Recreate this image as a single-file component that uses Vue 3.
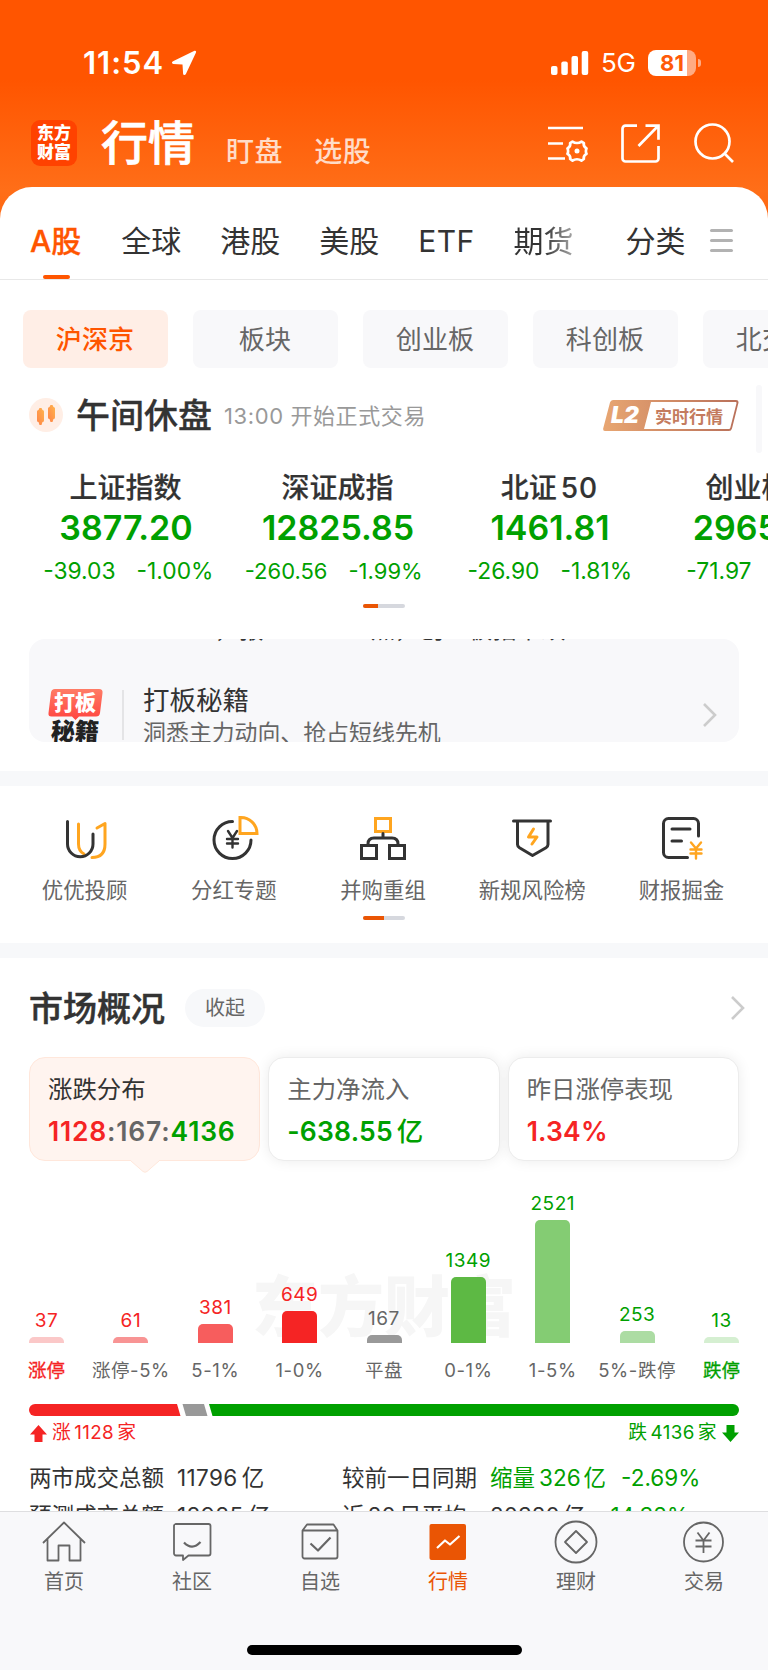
<template>
  <div class="page">
    <header class="header">
      <div class="status">
        <span class="status__time">11:54</span>
        <svg class="status__geo" width="26" height="26" viewBox="0 0 26 26">
          <path d="M23.500.8 2 11.200c-1.600.8-1.300 2.500.3 2.700l9.200.6.6 9.200c.2 1.700 2 1.900 2.800.3L25 2.400c.5-1.200-.4-2.100-1.500-1.600z" fill="#fff" />
        </svg>
        <svg class="status__signal" width="38" height="24" viewBox="0 0 38 24" fill="#fff">
          <rect x="0" y="15" width="6.500" height="9" rx="2" />
          <rect x="10.300" y="10.500" width="6.500" height="13.500" rx="2" />
          <rect x="20.500" y="5" width="6.500" height="19" rx="2" />
          <rect x="30.700" y="0" width="6.500" height="24" rx="2" />
        </svg>
        <span class="status__net">5G</span>
        <div class="battery"><span class="battery__text">81</span></div>
        <i class="battery__nub"></i>
      </div>

      <div class="nav">
        <div class="logo"><span>东方</span><span>财富</span></div>
        <h1 class="nav__title">行情</h1>
        <span class="nav__link">盯盘</span>
        <span class="nav__link nav__link--second">选股</span>
        <div class="nav__icons">
          <svg width="40" height="40" viewBox="0 0 40 40" fill="none" stroke="#fff" stroke-width="2.700">
            <path d="M0 5h35M0 20.500h15M0 35.500h17" />
            <path
              stroke-linejoin="round"
              stroke-width="2.700"
              d="M24.500 18.600c2.500 1.700 6.500 1.700 9 0l2.400 1.600c-.6 2.600.5 4 2.600 5.200q-1.200 2.800 0 5.400c-2.100 1.200-3.200 2.600-2.600 5.200l-2.400 1.600c-2.500-1.700-6.500-1.700-9 0l-2.400-1.600c.6-2.600-.5-4-2.600-5.200q1.200-2.600 0-5.400c2.100-1.200 3.200-2.600 2.600-5.200z"
            />
            <circle cx="29" cy="28" r="2.500" fill="#fff" stroke="none" />
          </svg>
          <svg width="40" height="40" viewBox="0 0 40 40" fill="none" stroke="#fff" stroke-width="2.700">
            <path d="M16 2.700H4.500a3 3 0 0 0-3 3V35.500a3 3 0 0 0 3 3H34.500a3 3 0 0 0 3-3V23" />
            <path d="M24.500 2.700h13v14M37 3 17.500 23" />
          </svg>
          <svg width="40" height="40" viewBox="0 0 40 40" fill="none" stroke="#fff" stroke-width="2.700">
            <circle cx="18.500" cy="18.500" r="17" />
            <path d="m30 30 9 9" />
          </svg>
        </div>
      </div>
    </header>

    <main class="panel">
      <nav class="tabs">
        <span
          v-for="tab in tabs"
          :key="tab"
          class="tabs__item"
          :class="{ 'tabs__item--active': tab === activeTab, 'tabs__item--fade': tab === '期货' }"
          >{{ tab }}</span
        >
        <span class="tabs__item tabs__item--all">分类</span>
        <i class="tabs__menu"></i>
      </nav>

      <div class="chips">
        <span
          v-for="(chip, i) in chips"
          :key="chip"
          class="chips__item"
          :class="{ 'chips__item--active': i === 0 }"
          >{{ chip }}</span
        >
      </div>

      <div class="session">
        <svg class="session__icon" width="34" height="34" viewBox="0 0 34 34">
          <defs>
            <linearGradient id="candle" x1="0" y1="1" x2="1" y2="0">
              <stop offset="0" stop-color="#ff8248" />
              <stop offset="1" stop-color="#ffb54d" />
            </linearGradient>
          </defs>
          <circle cx="17" cy="17" r="17" fill="#ffeee5" />
          <g fill="url(#candle)">
            <path d="M8 13.500q0-1.500 1.500-1.500l1-2h2l1 2q1.500 0 1.500 1.500v9q0 1.500-1.500 1.500l-1 3h-2l-1-3q-1.500 0-1.500-1.500z" />
            <path d="M19 10.500q0-1.500 1.500-1.500l1-2h2l1 2q1.500 0 1.500 1.500v9q0 1.500-1.500 1.500l-1 3h-2l-1-3q-1.500 0-1.500-1.500z" />
          </g>
        </svg>
        <h2 class="session__title">午间休盘</h2>
        <span class="session__note">13:00 开始正式交易</span>
        <div class="level2">
          <svg class="level2__frame" width="136" height="31" viewBox="0 0 136 31">
            <defs>
              <linearGradient id="copper" x1="0" x2="1">
                <stop offset="0" stop-color="#e8a672" />
                <stop offset="1" stop-color="#b9705a" />
              </linearGradient>
            </defs>
            <path d="M10 0H133q3 0 2.400 3L129 28.500q-.7 2.500-3 2.500H2.500Q-.5 31 .3 28L7 2.500Q7.700 0 10 0z" fill="url(#copper)" />
            <path d="M48 2H132.500q1.300 0 1 1.200L127.300 27.800q-.3 1.200-1.500 1.200H41z" fill="#fff" />
          </svg>
          <b class="level2__mark">L2</b>
          <span class="level2__text">实时行情</span>
        </div>
        <i class="session__side"></i>
      </div>

      <div class="indexes">
        <div v-for="item in indexes" :key="item.name" class="index">
          <p class="index__name">{{ item.name }}<span v-if="item.num" class="index__num">{{ item.num }}</span></p>
          <p class="index__price">{{ item.price }}</p>
          <p class="index__diff" :class="{ 'index__diff--long': item.diff.length > 6 }">
            <span>{{ item.diff }}</span><span>{{ item.percent }}</span>
          </p>
        </div>
      </div>
      <div class="dots"><i class="dots__on"></i></div>

      <div class="notice">
        <p class="notice__prev">，报12825.85点，创业板指下跌</p>
        <div class="notice__body">
          <div class="notice__art">
            <svg class="notice__badge" width="56" height="31" viewBox="0 0 56 31">
              <defs>
                <linearGradient id="coral" x1="0" y1="0" x2="0" y2="1">
                  <stop offset="0" stop-color="#ff7c66" />
                  <stop offset="1" stop-color="#ff4540" />
                </linearGradient>
              </defs>
              <path d="M7 0H51q4 0 3.500 4L52 24q-.5 3.500-4 3.500H31L27.500 31 24 27.500H3.500Q0 27.500.5 24L3 3.500Q3.500 0 7 0z" fill="url(#coral)" />
            </svg>
            <b class="notice__a">打板</b>
            <b class="notice__b">秘籍</b>
          </div>
          <i class="notice__line"></i>
          <div class="notice__text">
            <p class="notice__title">打板秘籍</p>
            <p class="notice__sub">洞悉主力动向、抢占短线先机</p>
          </div>
          <svg class="notice__arrow" width="14" height="24" viewBox="0 0 14 24" fill="none" stroke="#ccc" stroke-width="2.600">
            <path d="M1 1 12 12 1 23" />
          </svg>
        </div>
      </div>

      <div class="band"></div>

      <div class="services">
        <div v-for="s in services" :key="s.name" class="service">
          <svg
            width="50"
            height="50"
            viewBox="0 0 50 50"
            fill="none"
            stroke="#333"
            stroke-width="3"
            stroke-linecap="round"
            stroke-linejoin="round"
            v-html="s.icon"
          ></svg>
          <span class="service__name">{{ s.name }}</span>
        </div>
      </div>
      <div class="dots dots--services"><i class="dots__on dots__on--wide"></i></div>

      <div class="band"></div>

      <div class="market-head">
        <h2 class="market-head__title">市场概况</h2>
        <span class="market-head__fold">收起</span>
        <svg class="market-head__arrow" width="14" height="24" viewBox="0 0 14 24" fill="none" stroke="#ccc" stroke-width="2.600">
          <path d="M1 1 12 12 1 23" />
        </svg>
      </div>

      <div class="cards">
        <div class="card card--active">
          <p class="card__name">涨跌分布</p>
          <p class="card__value">
            <span class="up">1128</span><span class="flat">:167:</span><span class="down">4136</span>
          </p>
          <svg class="card__tail" width="28" height="13" viewBox="0 0 28 13">
            <path d="M0 1 12 11.500q2 1.500 4 0L28 1V0H0z" fill="#fff4ef" />
            <path d="M0 1 12 11.500q2 1.500 4 0L28 1" fill="none" stroke="#ffe7db" />
          </svg>
        </div>
        <div class="card">
          <p class="card__name">主力净流入</p>
          <p class="card__value down">-638.55<span class="card__unit">亿</span></p>
        </div>
        <div class="card">
          <p class="card__name">昨日涨停表现</p>
          <p class="card__value up">1.34%</p>
        </div>
      </div>

      <div class="chart">
        <span class="chart__mark">东方财富</span>
        <div v-for="b in bars" :key="b.label" class="bar" :class="'bar--' + b.type">
          <span class="bar__value">{{ b.value }}</span>
          <i class="bar__fill" :style="{ height: barHeight(b.value) + 'px', background: b.color }"></i>
          <span class="bar__label" :class="{ 'bar__label--edge': b.edge }">{{ b.label }}</span>
        </div>
      </div>

      <svg class="ratio" width="710" height="12" viewBox="0 0 710 12">
        <path d="M6 0H148L151.500 12H6A6 6 0 0 1 6 0z" fill="#f52424" />
        <path d="M153.500 0H175L178.500 12H157z" fill="#999" />
        <path d="M180 0H704a6 6 0 0 1 0 12H183.500z" fill="#00a000" />
      </svg>
      <div class="totals">
        <span class="totals__side up">
          <svg width="17" height="17" viewBox="0 0 17 17"><path d="M8.500 0 17 9.500H12.500V17h-8V9.500H0z" fill="#f52424" /></svg>
          <span>涨<em>1128</em>家</span>
        </span>
        <span class="totals__side down">
          <span>跌<em>4136</em>家</span>
          <svg width="17" height="17" viewBox="0 0 17 17"><path d="M8.500 17 17 7.500H12.500V0h-8V7.500H0z" fill="#00a000" /></svg>
        </span>
      </div>

      <div class="stats">
        <div v-for="row in stats" :key="row.name" class="stats__row">
          <span class="stats__name">{{ row.name }}</span>
          <span class="stats__amount">{{ row.amount }}<em>亿</em></span>
          <span class="stats__name">{{ row.compare }}</span>
          <span class="stats__delta" :class="{ down: row.prefix }"
            ><em v-if="row.prefix">{{ row.prefix }}</em>{{ row.delta }}<b>亿</b></span
          >
          <span class="down">{{ row.percent }}</span>
        </div>
      </div>
    </main>

    <footer class="tabbar">
      <div class="tabbar__list">
        <div v-for="t in tabbar" :key="t.name" class="tabbar__item" :class="{ 'tabbar__item--active': t.active }">
          <svg
            width="44"
            height="44"
            viewBox="0 0 44 44"
            fill="none"
            stroke="#666"
            stroke-width="1.800"
            stroke-linejoin="round"
            v-html="t.icon"
          ></svg>
          <span>{{ t.name }}</span>
        </div>
      </div>
      <i class="tabbar__home"></i>
    </footer>
  </div>
</template>

<script setup>
import { ref } from "vue";

const tabs = ["A股", "全球", "港股", "美股", "ETF", "期货"];
const activeTab = ref("A股");

const chips = ["沪深京", "板块", "创业板", "科创板", "北交所"];

const indexes = [
  { name: "上证指数", price: "3877.20", diff: "-39.03", percent: "-1.00%" },
  { name: "深证成指", price: "12825.85", diff: "-260.56", percent: "-1.99%" },
  { name: "北证", num: "50", price: "1461.81", diff: "-26.90", percent: "-1.81%" },
  { name: "创业板指", price: "2965.85", diff: "-71.97", percent: "-2.37%" },
];

const services = [
  {
    name: "优优投顾",
    icon: `<path stroke="#ffa51f" d="M18.500 10V30q0 7 5.500 10M37 14l8-4.500V30Q45 43.500 32 43.500"/>
      <path d="M7.500 7.500V30a12.500 12.500 0 0 0 25.500 0V20"/>`,
  },
  {
    name: "分红专题",
    icon: `<path d="M23.500 7.500A18.500 18.500 0 1 0 42 26"/>
      <path stroke="#ffa51f" stroke-linejoin="miter" d="M31 3.500V19.500H48A16 16 0 0 0 31 3.500z"/>
      <path stroke-width="2.400" d="m19 17 4.500 7 4.500-7M18 25h11M18 29.500h11M23.500 24v9.500"/>`,
  },
  {
    name: "并购重组",
    icon: `<g stroke-linejoin="miter"><path stroke="#ffa51f" d="M17.500 4.500h15V17.500H17.500z"/>
      <path d="M25 19.500v4.500M10 30q0-6 6-6H34q6 0 6 6"/>
      <path d="M3.500 31.500h15v13h-15zM31.500 31.500h15v13h-15z"/></g>`,
  },
  {
    name: "新规风险榜",
    icon: `<path d="M6.500 7h37M10.500 8V30.500q0 2 2 3.300L25.500 41.500 39 33.800q2-1.300 2-3.300V8"/>
      <path stroke="#ffa51f" d="m26.500 15-5 8h8.500L25 30"/>`,
  },
  {
    name: "财报掘金",
    icon: `<path d="M42.500 22V9.500a5 5 0 0 0-5-5H12.500a5 5 0 0 0-5 5V38.500a5 5 0 0 0 5 5H31.500M16 15h18M16 27h9.500"/>
      <path stroke="#ffa51f" stroke-width="2.400" d="m35 28.500 5 6 5-6M34.500 35.500h11M34.500 39.500h11M40 34v10.500"/>`,
  },
];

const bars = [
  { value: 37, label: "涨停", color: "#fbc8c8", type: "up", edge: true },
  { value: 61, label: "涨停-5%", color: "#f89494", type: "up" },
  { value: 381, label: "5-1%", color: "#f75d5d", type: "up" },
  { value: 649, label: "1-0%", color: "#f52424", type: "up" },
  { value: 167, label: "平盘", color: "#999", type: "flat" },
  { value: 1349, label: "0-1%", color: "#5db944", type: "down" },
  { value: 2521, label: "1-5%", color: "#84cc73", type: "down" },
  { value: 253, label: "5%-跌停", color: "#acdca3", type: "down" },
  { value: 13, label: "跌停", color: "#d5efd1", type: "down", edge: true },
];

// самый высокий столбец — 123px, самый низкий — 6px
const barHeight = (value) => Math.max(6, Math.round((value / 2521) * 123));

const stats = [
  { name: "两市成交总额", amount: "11796", compare: "较前一日同期", prefix: "缩量", delta: "326", percent: "-2.69%" },
  { name: "预测成交总额", amount: "18985", compare: "近 20 日平均", prefix: "", delta: "20320", percent: "-14.32%" },
];

const tabbar = [
  { name: "首页", icon: `<path d="M1 23 22 2.500 43 23M5.500 19V40.500H16.500V25.500h11V40.500H38.500V19"/>` },
  {
    name: "社区",
    icon: `<path d="M5.500 4h33a2 2 0 0 1 2 2V33.500a2 2 0 0 1-2 2H18.500l-5.500 4.500V35.500H6a2 2 0 0 1-2-2V6a2 2 0 0 1 1.500-2z"/>
      <path d="M14 22.500Q22 31 30.500 22" stroke-width="2.200"/>`,
  },
  {
    name: "自选",
    icon: `<path d="M4.500 10.500 9 4.500H35.500L39.500 10.500V36.500a2 2 0 0 1-2 2h-31a2 2 0 0 1-2-2zM4.500 10.500h35"/>
      <path d="m12.500 23.500 7.500 7L32.500 17.500" stroke-width="2.200"/>`,
  },
  {
    name: "行情",
    active: true,
    icon: `<rect x="3.500" y="4" width="36.500" height="36" rx="2" fill="#ea5504" stroke="none"/>
      <path d="m11 28 8-7.500 5 4L33.500 16" stroke="#fff" stroke-width="2.200"/>`,
  },
  { name: "理财", icon: `<circle cx="22" cy="22" r="20.500"/><path d="M22 11 33 22 22 33 11 22z"/>` },
  {
    name: "交易",
    icon: `<circle cx="21.500" cy="22" r="19.500"/>
      <path d="m15.500 12.500 6 8 6-8M13.500 20.500h16M13.500 26.500h16M21.500 20.500V33"/>`,
  },
];
</script>

<style>
body {
  margin: 0;
}
</style>

<style scoped>
.page {
  position: relative;
  display: flex;
  flex-direction: column;
  width: 768px;
  height: 1670px;
  overflow: hidden;
  background: linear-gradient(#ff5500 0, #ff5500 80px, #ff6e18 190px, #ff6610 230px);
  font-family: Inter, "Noto Sans CJK SC", sans-serif;
  color: #333;
  white-space: nowrap;
}
p,
h1,
h2 {
  margin: 0;
}
i,
em {
  font-style: normal;
}
svg {
  display: block;
  flex: none;
}
.up {
  color: #f52424;
}
.down {
  color: #00a000;
}
.flat {
  color: #666;
}

.header {
  flex: none;
  height: 187px;
  .status {
    display: flex;
    align-items: center;
    height: 77px;
    padding: 24px 0 0 83px;
    color: #fff;
    .status__time {
      width: 81px;
      font-size: 31px;
      font-weight: 600;
      letter-spacing: 1px;
    }
    .status__geo {
      margin-left: 7px;
    }
    .status__signal {
      margin-left: 354px;
    }
    .status__net {
      width: 34px;
      margin-left: 12px;
      font-size: 26px;
      letter-spacing: -0.300px;
    }
    .battery {
      display: flex;
      align-items: center;
      justify-content: center;
      width: 48px;
      height: 26px;
      margin-left: 13px;
      border-radius: 8px;
      background: linear-gradient(90deg, #fff 39px, #ffab83 39px);
      .battery__text {
        font-size: 22px;
        font-weight: 700;
        color: #ff5a08;
      }
    }
    .battery__nub {
      width: 3px;
      height: 8px;
      margin-left: 2px;
      border-radius: 0 3px 3px 0;
      background: #ffab83;
    }
  }
  .nav {
    display: flex;
    align-items: center;
    height: 86px;
    margin-top: -1px;
    padding-left: 31px;
    .logo {
      display: flex;
      flex-direction: column;
      align-items: center;
      justify-content: center;
      width: 46px;
      height: 46px;
      border-radius: 9px;
      background: #ff4200;
      color: #fff;
      font-size: 17px;
      font-weight: 900;
      line-height: 19px;
    }
    .nav__title {
      margin-left: 24px;
      color: #fff;
      font-size: 47px;
      font-weight: 500;
      line-height: 60px;
      -webkit-text-stroke: 0.700px #fff;
    }
    .nav__link {
      margin: 18px 0 0 31px;
      color: #ffdcc8;
      font-size: 28px;
      font-weight: 500;
      letter-spacing: 0.600px;
      line-height: 36px;
    }
    .nav__link--second {
      margin-left: 31px;
    }
    .nav__icons {
      display: flex;
      gap: 33px;
      margin-left: 177px;
    }
  }
}

.panel {
  flex: none;
  height: 1324px;
  overflow: hidden;
  border-radius: 32px 32px 0 0;
  background: #fff;
}

.tabs {
  display: flex;
  align-items: center;
  height: 92px;
  padding-left: 30px;
  gap: 39px;
  border-bottom: 1px solid #e8e8e8;
  .tabs__item {
    position: relative;
    height: 76px;
    padding-top: 16px;
    font-size: 30px;
    line-height: 76px;
    &:nth-child(5) {
      letter-spacing: 0.400px;
    }
  }
  .tabs__item--active {
    margin-right: 1px;
    color: #ff5500;
    font-weight: 500;
    -webkit-text-stroke: 0.300px #ff5500;
    &::after {
      content: "";
      position: absolute;
      left: 13px;
      bottom: 0;
      width: 27px;
      height: 4px;
      border-radius: 2px;
      background: #ff5500;
    }
  }
  .tabs__item--fade {
    background: linear-gradient(90deg, #333 30px, #aaa);
    background-clip: text;
    color: transparent;
  }
  .tabs__item--all {
    margin-left: 13px;
  }
  .tabs__menu {
    width: 23px;
    height: 3px;
    margin: 15px 0 0 -15px;
    border-radius: 2px;
    background: #b2b2b2;
    box-shadow: 0 -10px #b2b2b2, 0 10px #b2b2b2;
  }
}

.chips {
  display: flex;
  gap: 25px;
  padding: 30px 0 0 23px;
  .chips__item {
    box-sizing: border-box;
    flex: none;
    width: 145px;
    height: 58px;
    padding-right: 1px;
    border-radius: 8px;
    background: #f8f8fa;
    color: #666;
    font-size: 26px;
    letter-spacing: 0.200px;
    line-height: 60px;
    text-align: center;
  }
  .chips__item--active {
    background: #ffeee6;
    color: #ff5500;
    font-weight: 500;
  }
}

.session {
  display: flex;
  align-items: center;
  height: 68px;
  margin-top: 17px;
  padding-left: 29px;
  .session__icon {
    margin-top: -8px;
  }
  .session__title {
    margin: -6px 0 0 13px;
    font-size: 34px;
    font-weight: 500;
    line-height: 50px;
    -webkit-text-stroke: 0.300px #333;
  }
  .session__note {
    width: 203px;
    margin: -10px 0 0 12px;
    color: #999;
    font-size: 22px;
    letter-spacing: 0.600px;
  }
  .level2 {
    position: relative;
    display: flex;
    align-items: center;
    width: 136px;
    height: 31px;
    margin: -8px 0 0 176px;
    .level2__frame {
      position: absolute;
      inset: 0;
    }
    .level2__mark {
      position: relative;
      width: 44px;
      padding-left: 8px;
      color: #fff;
      font-size: 23px;
      font-style: italic;
      font-weight: 900;
    }
    .level2__text {
      position: relative;
      color: #c47b5e;
      font-size: 17px;
      font-weight: 700;
    }
  }
  .session__side {
    width: 6px;
    height: 68px;
    margin-left: 17px;
    border-radius: 3px;
    background: #f8f8fa;
  }
}

.indexes {
  display: flex;
  padding-left: 20px;
  .index {
    flex: none;
    width: 212px;
    text-align: center;
    .index__name {
      margin: 15px 0 0 -1px;
      font-size: 28px;
      font-weight: 500;
      line-height: 40px;
      -webkit-text-stroke: 0.200px #333;
    }
    .index__num {
      margin-left: 4px;
      letter-spacing: 1px;
    }
    .index__price {
      color: #00a000;
      font-size: 34px;
      font-weight: 600;
      line-height: 40px;
    }
    .index__diff {
      display: flex;
      gap: 21px;
      margin-top: 7px;
      color: #00a000;
      font-size: 22.800px;
      line-height: 32px;
      /* зазор между числами стоит по центру колонки */
      span {
        flex: 1 1 0;
        text-align: left;
      }
      span:first-child {
        text-align: right;
      }
    }
    .index__diff--long {
      font-size: 22px;
    }
  }
}

.dots {
  width: 42px;
  height: 4px;
  margin: 17px auto 0 363px;
  border-radius: 2px;
  overflow: hidden;
  background: #d6d8de;
  .dots__on {
    display: block;
    width: 15px;
    height: 4px;
    background: #ea5504;
  }
  .dots__on--wide {
    width: 21px;
  }
}
.dots--services {
  margin: 11px auto 23px 363px;
}

.notice {
  height: 103px;
  margin: 31px 29px 29px;
  overflow: hidden;
  border-radius: 16px;
  background: #f8f8fa;
  .notice__prev {
    height: 40px;
    margin-top: -29px;
    padding-left: 186px;
    font-size: 24px;
    letter-spacing: 0.400px;
    line-height: 40px;
  }
  .notice__body {
    display: flex;
    padding: 34px 0 0 19px;
  }
  .notice__art {
    position: relative;
    width: 56px;
    height: 70px;
    padding-top: 5px;
    .notice__badge {
      position: absolute;
    }
    b {
      position: relative;
      display: block;
      font-weight: 900;
    }
    .notice__a {
      padding-left: 6px;
      color: #fff;
      font-size: 21px;
      line-height: 28px;
    }
    .notice__b {
      margin-top: 2px;
      padding-left: 3px;
      color: #222;
      font-size: 24px;
      line-height: 25px;
      transform: skewX(-3deg);
    }
  }
  .notice__line {
    width: 2px;
    height: 50px;
    margin: 6px 0 0 18px;
    background: #e4e4e6;
  }
  .notice__text {
    width: 500px;
    margin-left: 19px;
    .notice__title {
      font-size: 26.500px;
      line-height: 32px;
    }
    .notice__sub {
      color: #666;
      font-size: 22.900px;
      line-height: 34px;
    }
  }
  .notice__arrow {
    margin: 19px 0 0 60px;
  }
}

.band {
  height: 15px;
  background: #f7f8fa;
}

.services {
  display: flex;
  padding: 28px 12px 0 10px;
  .service {
    display: flex;
    flex: 1;
    flex-direction: column;
    align-items: center;
    .service__name {
      margin-top: 11px;
      color: #666;
      font-size: 21.400px;
      line-height: 30px;
    }
  }
}

.market-head {
  display: flex;
  align-items: center;
  height: 99px;
  padding-left: 29px;
  .market-head__title {
    margin-top: -2px;
    font-size: 34px;
    font-weight: 500;
    -webkit-text-stroke: 0.500px #333;
  }
  .market-head__fold {
    width: 80px;
    height: 38px;
    margin-left: 20px;
    border-radius: 19px;
    background: #f7f8fa;
    color: #666;
    font-size: 20px;
    line-height: 38px;
    text-align: center;
  }
  .market-head__arrow {
    margin-left: 466px;
  }
}

.cards {
  display: flex;
  gap: 8px;
  padding: 0 29px;
  .card {
    position: relative;
    box-sizing: border-box;
    flex: 1;
    height: 104px;
    padding: 15px 0 0 18px;
    border: 1px solid #ececec;
    border-radius: 16px;
    background: #fff;
    box-shadow: 0 0 14px rgba(0, 0, 0, 0.080);
    .card__name {
      color: #666;
      font-size: 24.400px;
      line-height: 32px;
    }
    .card__value {
      margin-top: 9px;
      font-size: 26.500px;
      font-weight: 600;
      letter-spacing: 0.200px;
      line-height: 34px;
    }
    .card__unit {
      margin-left: 4px;
      font-weight: 500;
    }
    .card__tail {
      position: absolute;
      left: 101px;
      top: 102px;
    }
  }
  .card--active {
    border-color: #ffe7db;
    background: #fff4ef;
    box-shadow: none;
    .card__name {
      color: #333;
    }
    .card__value {
      letter-spacing: 0.800px;
    }
  }
}

.chart {
  position: relative;
  display: flex;
  justify-content: space-between;
  height: 228px;
  padding: 0 29px;
  .chart__mark {
    position: absolute;
    left: 252px;
    top: 98px;
    color: #f6f6f6;
    font-size: 66px;
    font-weight: 900;
    line-height: 96px;
  }
  .bar {
    position: relative;
    display: flex;
    flex-direction: column;
    align-items: center;
    justify-content: flex-end;
    width: 35px;
    .bar__value {
      margin-bottom: 4px;
      font-size: 19px;
      letter-spacing: 0.500px;
      line-height: 25px;
    }
    .bar__fill {
      flex: none;
      width: 35px;
      border-radius: 5px 5px 0 0;
    }
    .bar__label {
      margin-top: 13px;
      padding-bottom: 5px;
      color: #666;
      font-size: 18.500px;
      letter-spacing: 0.600px;
      line-height: 28px;
    }
  }
  .bar--up .bar__value,
  .bar--up .bar__label--edge {
    color: #f52424;
  }
  .bar--down .bar__value,
  .bar--down .bar__label--edge {
    color: #00a000;
  }
  .bar--flat .bar__value {
    color: #666;
  }
  .bar .bar__label--edge {
    letter-spacing: 0;
    -webkit-text-stroke: 0.300px;
  }
}

.ratio {
  margin: 15px 29px 0;
}
.totals {
  display: flex;
  justify-content: space-between;
  padding: 3px 29px 0 30px;
  font-size: 18.800px;
  letter-spacing: 0.400px;
  line-height: 28px;
  .totals__side {
    display: flex;
    align-items: center;
    gap: 5px;
  }
  em {
    margin: 0 3px;
  }
}

.stats {
  padding-top: 12px;
  .stats__row {
    display: flex;
    height: 38px;
    padding-left: 29px;
    font-size: 22.500px;
    line-height: 38px;
    .stats__name {
      width: 148px;
      word-spacing: -3px;
    }
    .stats__amount {
      width: 165px;
      letter-spacing: 0.400px;
      em {
        margin-left: 4px;
      }
    }
    .stats__delta {
      margin-right: 15px;
      em {
        margin-right: 4px;
      }
      b {
        margin-left: 3px;
        font-weight: 400;
      }
    }
  }
}

.tabbar {
  flex: 1;
  border-top: 1px solid #dedee0;
  background: #f8f8fa;
  .tabbar__list {
    display: flex;
    padding-top: 8px;
    .tabbar__item {
      display: flex;
      flex: 1;
      flex-direction: column;
      align-items: center;
      color: #666;
      font-size: 20px;
      line-height: 30px;
      span {
        margin-top: 3px;
      }
    }
    .tabbar__item--active {
      color: #ea5504;
    }
  }
  .tabbar__home {
    display: block;
    width: 275px;
    height: 10px;
    margin: 48px auto 0;
    border-radius: 5px;
    background: #000;
  }
}
</style>
